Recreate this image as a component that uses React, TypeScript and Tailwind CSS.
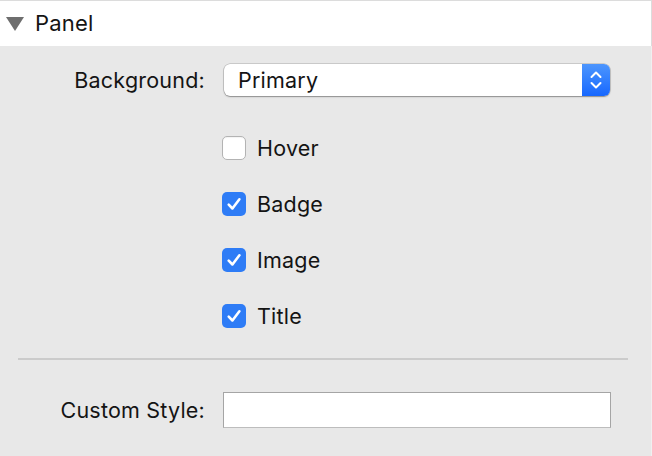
import React from "react";

function Check({ checked }: { checked: boolean }) {
  if (!checked) {
    return (
      <div className="h-[24px] w-[24px] rounded-[5px] border border-[#b3b3b3] bg-white shadow-[inset_0_1px_1px_rgba(0,0,0,0.05)]" />
    );
  }
  return (
    <div className="flex h-[24px] w-[24px] items-center justify-center rounded-[5px] bg-[#2e7cf6]">
      <svg width="18" height="18" viewBox="0 0 16 16" fill="none">
        <path d="M3.3 8.6 L6.6 12 L12.8 3.8" stroke="white" strokeWidth="2.3" strokeLinecap="round" strokeLinejoin="round" />
      </svg>
    </div>
  );
}

export default function App() {
  const items: [string, boolean][] = [
    ["Hover", false],
    ["Badge", true],
    ["Image", true],
    ["Title", true],
  ];
  return (
    <div
      className="flex h-[456px] w-[652px] flex-col bg-[#e8e8e8] text-[21.5px] tracking-[0.01em] text-[#141414]"
      style={{ fontFamily: "Inter, 'Liberation Sans', sans-serif" }}
    >
      <div className="flex h-[46px] items-center border-t border-r border-[#dcdcdc] bg-white pl-[6px]">
        <svg width="18" height="15" viewBox="0 0 18 15" className="mr-[11px] mt-[1px]">
          <path d="M0 0 H18 L9 14 Z" fill="#6e6e6e" />
        </svg>
        <span className="text-[22px]">Panel</span>
      </div>
      <div className="flex flex-1 flex-col border-r border-[#f0f0f0]">
        <div className="mt-[18px] flex items-center">
          <div className="w-[205px] text-right">Background:</div>
          <div className="ml-[19px] flex h-[32px] w-[386px] items-stretch overflow-hidden rounded-[6px] bg-white shadow-[0_0_0_0.5px_rgba(0,0,0,0.25),0_1px_1.5px_rgba(0,0,0,0.3)]">
            <div className="flex flex-1 items-center pl-[14px]">Primary</div>
            <div className="flex w-[28px] items-center justify-center bg-gradient-to-b from-[#4c95fd] to-[#1667fe]">
              <svg width="14" height="22" viewBox="0 0 14 22" fill="none">
                <path d="M2.5 8 L7 3.5 L11.5 8" stroke="white" strokeWidth="2" strokeLinecap="round" strokeLinejoin="round" />
                <path d="M2.5 14 L7 18.5 L11.5 14" stroke="white" strokeWidth="2" strokeLinecap="round" strokeLinejoin="round" />
              </svg>
            </div>
          </div>
        </div>
        <div className="mt-[40px] flex flex-col gap-[32px] pl-[222px]">
          {items.map(([label, c]) => (
            <div key={label} className="flex h-[24px] items-center">
              <Check checked={c} />
              <span className="ml-[11px]">{label}</span>
            </div>
          ))}
        </div>
        <div className="ml-[18px] mr-[23px] mt-[30px] h-[2px] bg-[#cbcbcb]" />
        <div className="mt-[32px] flex items-center">
          <div className="w-[205px] text-right">Custom Style:</div>
          <div className="ml-[18px] h-[36px] w-[388px] border border-[#a5a5a5] border-b-[#bdbdbd] bg-white" />
        </div>
      </div>
    </div>
  );
}
